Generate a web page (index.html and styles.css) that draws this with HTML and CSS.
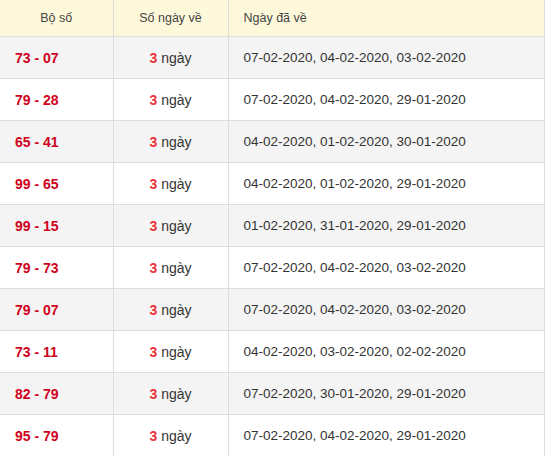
FILE: index.html
```html
<!DOCTYPE html>
<html lang="vi">
<head>
<meta charset="utf-8">
<link rel="stylesheet" href="styles.css">
</head>
<body>
<table class="stats">
  <colgroup><col class="w1"><col class="w2"><col class="w3"></colgroup>
  <thead>
    <tr><th class="c1">Bộ số</th><th class="c2">Số ngày về</th><th class="c3">Ngày đã về</th></tr>
  </thead>
  <tbody>
    <tr><td class="pair">73 - 07</td><td class="days"><b>3</b> ngày</td><td class="dates">07-02-2020, 04-02-2020, 03-02-2020</td></tr>
    <tr><td class="pair">79 - 28</td><td class="days"><b>3</b> ngày</td><td class="dates">07-02-2020, 04-02-2020, 29-01-2020</td></tr>
    <tr><td class="pair">65 - 41</td><td class="days"><b>3</b> ngày</td><td class="dates">04-02-2020, 01-02-2020, 30-01-2020</td></tr>
    <tr><td class="pair">99 - 65</td><td class="days"><b>3</b> ngày</td><td class="dates">04-02-2020, 01-02-2020, 29-01-2020</td></tr>
    <tr><td class="pair">99 - 15</td><td class="days"><b>3</b> ngày</td><td class="dates">01-02-2020, 31-01-2020, 29-01-2020</td></tr>
    <tr><td class="pair">79 - 73</td><td class="days"><b>3</b> ngày</td><td class="dates">07-02-2020, 04-02-2020, 03-02-2020</td></tr>
    <tr><td class="pair">79 - 07</td><td class="days"><b>3</b> ngày</td><td class="dates">07-02-2020, 04-02-2020, 03-02-2020</td></tr>
    <tr><td class="pair">73 - 11</td><td class="days"><b>3</b> ngày</td><td class="dates">04-02-2020, 03-02-2020, 02-02-2020</td></tr>
    <tr><td class="pair">82 - 79</td><td class="days"><b>3</b> ngày</td><td class="dates">07-02-2020, 30-01-2020, 29-01-2020</td></tr>
    <tr><td class="pair">95 - 79</td><td class="days"><b>3</b> ngày</td><td class="dates">07-02-2020, 04-02-2020, 29-01-2020</td></tr>
  </tbody>
</table>
</body>
</html>
```
FILE: styles.css
```css
html, body {
  margin: 0;
  padding: 0;
  background: #fff;
}
body {
  font-family: "Liberation Sans", Arial, sans-serif;
  font-size: 14px;
  color: #333;
}
.stats {
  width: 545px;
  border-collapse: collapse;
  table-layout: fixed;
}
.w1 { width: 113px; }
.w2 { width: 115px; }
.stats th, .stats td {
  border: 1px solid #ddd;
  padding: 0 15px;
  text-align: left;
  white-space: nowrap;
}
.stats tr > :first-child { border-left: none; }
.stats thead th {
  border-top: none;
  height: 36px;
  background: #fef8db;
  font-weight: normal;
  font-size: 12.5px;
  color: #444;
}
.stats th.c1, .stats th.c2 { text-align: center; }
.stats td { height: 41px; }
.stats tbody tr:nth-child(odd) td { background: #f4f4f4; }
.pair {
  color: #d0021b;
  font-weight: bold;
}
.stats td.days { text-align: center; }
.days b { color: #e8333b; }
.stats td.dates { font-size: 13.5px; }
```
